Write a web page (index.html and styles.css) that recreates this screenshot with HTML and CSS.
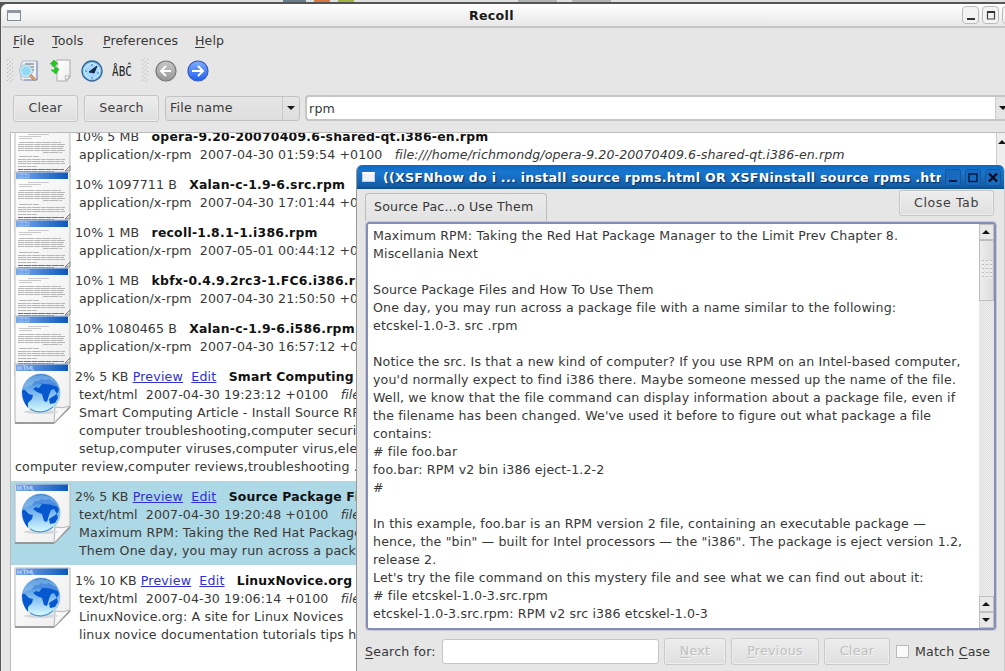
FILE: index.html
```html
<!DOCTYPE html>
<html lang="en">
<head>
<meta charset="utf-8">
<title>Recoll</title>
<link rel="stylesheet" href="styles.css">
</head>
<body>
<svg class="defs" width="0" height="0" aria-hidden="true">
  <defs>
    <linearGradient id="blueBar"><stop offset="0" stop-color="#78a9ed"/><stop offset=".3" stop-color="#5d91de"/><stop offset="1" stop-color="#0b57ba"/></linearGradient>
    <linearGradient id="paper" x1="0" y1="0" x2="1" y2="1"><stop offset="0" stop-color="#fff"/><stop offset="1" stop-color="#ededed"/></linearGradient>
    <linearGradient id="sky" x1="0" y1="0" x2="0" y2="1"><stop offset="0" stop-color="#2878d0"/><stop offset=".5" stop-color="#7dbaf0"/><stop offset="1" stop-color="#d8fbff"/></linearGradient>
    <linearGradient id="blueBtn" x1="0" y1="0" x2="0" y2="1"><stop offset="0" stop-color="#82adff"/><stop offset="1" stop-color="#1e5ef0"/></linearGradient>
    <linearGradient id="greyBtn" x1="0" y1="0" x2="0" y2="1"><stop offset="0" stop-color="#c8c8c8"/><stop offset="1" stop-color="#959595"/></linearGradient>
    <symbol id="sheet" viewBox="0 0 58 62">
      <path d="M1 1H56V44L40 60H1Z" fill="url(#paper)" stroke="#b5b5b5"/>
      <path d="M1 60H40L56 44" fill="none" stroke="#888" stroke-width="1.5"/>
      <path d="M40 60L41 44Q48 46 56 43Z" fill="#f8f8f8" stroke="#b5b5b5"/>
      <path d="M2 1.500H54V8H2Z" fill="url(#blueBar)"/>
    </symbol>
    <symbol id="doc" viewBox="0 0 58 62">
      <path d="M1 1H56V44L40 60H1Z" fill="url(#paper)" stroke="#bbb"/>
      <path d="M2 1.500H54V8H2Z" fill="url(#blueBar)"/>
      <path d="M4 3H15V7H4M8 3V7M12 3V7" fill="none" stroke="#a9c9f5" stroke-width=".8"/>
      <g fill="none" stroke="#a6a6a6" stroke-width=".8">
        <path d="M14 11.500H35M5 13.500H27M5 15.500H18" stroke="#bbb"/>
        <path d="M5 19.500H47M4 21.500H51M4 23.500H50M4 25.500H49M4 27.500H51M29 29.500H48" stroke-dasharray="6 .5 9 .8"/>
        <path d="M5 33.500H25M4 36.500H51M4 38.500H50M4 40.500H51M4 43.500H23" stroke-dasharray="8 .5 5 .7"/>
        <path d="M4 46.500H50M4 48.500H40" stroke="#555" stroke-dasharray="5 .5 8 .5"/>
      </g>
      <path d="M51 48L56 43V48Z" fill="#ddd" stroke="#666" stroke-width=".8"/>
    </symbol>
    <symbol id="web" viewBox="0 0 58 62">
      <use href="#sheet"/>
      <path d="M4 3V7M4 5H7M7 3V7M9 3H12M10.500 3V7M13 7V3L15 6L17 3V7M18 3V7H20" fill="none" stroke="#c8ddfa" stroke-width=".8"/>
      <ellipse cx="27" cy="49" rx="17" ry="2" fill="#d6d9dc"/>
      <circle cx="27" cy="30" r="19" fill="url(#sky)" stroke="#78acd5" stroke-width=".6"/>
      <path d="M8 28Q9 25 12 28L15 31L19 32L18 36L14 40L14 45Q8 38 8 28ZM18 22L21 18L25 18L26 16L31 17L35 16L42 20L45 27L43 31L40 26L37 27L35 32L33 39L30 38L28 31L23 29L19 26L22 24L25 25L28 21L23 21ZM35 36L38 34L43 31L44 35L41 40L36 41Z" fill="#0758cf"/>
      <path d="M10 25Q11 13 27 12Q41 13 44 24Q27 17 10 25Z" fill="#a7cef2" opacity=".45"/>
      <path d="M16 46Q27 53 39 44" stroke="#418bd0" fill="none"/>
    </symbol>
  </defs>
</svg>

<main class="desktop">
  <div class="backdrop"><i class="chip slate"></i><i class="chip orange"></i><i class="chip green"></i><i class="chip grey"></i><i class="chip grey"></i></div>
  <section class="main-window">
    <header class="titlebar">
      <i class="win-icon"></i>
      <h1>Recoll</h1>
      <div class="win-buttons">
        <b><svg width="17" height="18"><path d="M4 12H12" stroke="#333" stroke-width="2"/></svg></b>
        <b><svg width="17" height="18"><path d="M4.500 5H11.500V12H4.500Z" fill="none" stroke="#444" stroke-width="1.200"/><path d="M4 5H12" stroke="#333" stroke-width="2"/></svg></b>
        <b></b>
      </div>
    </header>
    <nav class="menu"><span class="m1"><u>F</u>ile</span><span class="m2"><u>T</u>ools</span><span class="m3"><u>P</u>references</span><span class="m4"><u>H</u>elp</span></nav>
    <div class="toolbar">
      <svg width="215" height="34" viewBox="0 0 215 34">
        <g stroke="#bbb" stroke-width="1"><path id="grip" d="M7 7l3-3M7 11l6-6M7 15l6-6M7 19l6-6M7 23l6-6M7 27l6-6M10 28l3-3" stroke-dasharray="2 1.500"/><use href="#grip" x="135"/></g>
        <path d="M23 7H37V26H21V10Z" fill="#edf0f7" stroke="#adb4c5"/><path d="M37 7V26H24" fill="none" stroke="#8090b5"/>
        <path d="M25 10H34M29 13H34M31 16H34" stroke="#666"/>
        <circle cx="26" cy="17" r="5.500" fill="#91d9f5" stroke="#cee8f3" stroke-width="2"/><circle cx="26" cy="17" r="6.500" fill="none" stroke="#78a8bd" stroke-width=".6"/>
        <path d="M30 21L35 26" stroke="#bd8050" stroke-width="3"/><path d="M30 21L35 26" stroke="#f2bf8c" stroke-width="1"/>
        <path d="M57 6H70V23L67 27H57Z" fill="url(#paper)" stroke="#aaa"/><path d="M66 26L70 22L65 22Z" fill="#fff" stroke="#999" stroke-width=".7"/>
        <path d="M50 10L54 6L58 10H56L55 13L59 15L56 20L51 16H54L55 13L52 12V10Z" fill="#1ecf18" stroke="#3cab42" stroke-width=".7"/>
        <circle cx="92" cy="17" r="10" fill="#8bc8fc" stroke="#326590" stroke-width="1.300"/><circle cx="92" cy="17" r="7.500" fill="#a4d6ff" stroke="#d9f0ff"/>
        <path d="M89 18L97 12L94 19Z" fill="#152b44" stroke="#152b44"/><path d="M85 17H87M92 10V12M92 23V25M97 19H99" stroke="#397cae"/>
        <circle cx="166" cy="17" r="10" fill="url(#greyBtn)" stroke="#777" stroke-width="1.200"/><path d="M171 17H161M166 12L161 17L166 22" fill="none" stroke="#fff" stroke-width="2"/>
        <circle cx="198" cy="17" r="10" fill="url(#blueBtn)" stroke="#385bbf" stroke-width="1.200"/><path d="M192 17H202M198 12L203 17L198 22" fill="none" stroke="#fff" stroke-width="2"/>
        <text x="112" y="22" class="spell" textLength="20" lengthAdjust="spacingAndGlyphs">ÅBĈ</text>
      </svg>
    </div>
    <div class="query">
      <button class="clear">Clear</button><button class="search">Search</button>
      <div class="combo"><span>File name</span><i><em class="down"></em></i></div>
      <div class="entry"><span>rpm</span><i><em class="down"></em></i></div>
    </div>
    <div class="results">
      <article class="rpm"><svg class="thumb"><use href="#doc"/></svg><div class="info"><p>10% 5 MB &nbsp; <b>opera-9.20-20070409.6-shared-qt.i386-en.rpm</b></p><p class="in">application/x-rpm &nbsp;2007-04-30 01:59:54 +0100 &nbsp; <cite>file:///home/richmondg/opera-9.20-20070409.6-shared-qt.i386-en.rpm</cite></p></div></article>
      <article class="rpm"><svg class="thumb"><use href="#doc"/></svg><div class="info"><p>10% 1097711 B &nbsp; <b>Xalan-c-1.9-6.src.rpm</b></p><p class="in">application/x-rpm &nbsp;2007-04-30 17:01:44 +0100</p></div></article>
      <article class="rpm"><svg class="thumb"><use href="#doc"/></svg><div class="info"><p>10% 1 MB &nbsp; <b>recoll-1.8.1-1.i386.rpm</b></p><p class="in">application/x-rpm &nbsp;2007-05-01 00:44:12 +0100</p></div></article>
      <article class="rpm"><svg class="thumb"><use href="#doc"/></svg><div class="info"><p>10% 1 MB &nbsp; <b>kbfx-0.4.9.2rc3-1.FC6.i386.rpm</b></p><p class="in">application/x-rpm &nbsp;2007-04-30 21:50:50 +0100</p></div></article>
      <article class="rpm"><svg class="thumb"><use href="#doc"/></svg><div class="info"><p>10% 1080465 B &nbsp; <b>Xalan-c-1.9-6.i586.rpm</b></p><p class="in">application/x-rpm &nbsp;2007-04-30 16:57:12 +0100</p></div></article>
      <article><svg class="thumb"><use href="#web"/></svg><div class="info"><p>2% 5 KB <a>Preview</a>&nbsp; <a>Edit</a> &nbsp; <b>Smart Computing</b></p><p class="in">text/html &nbsp;2007-04-30 19:23:12 +0100 &nbsp; <cite>file</cite></p><p class="in wide">Smart Computing Article - Install Source RPMs</p><p class="in wide">computer troubleshooting,computer security</p><p class="in wide">setup,computer viruses,computer virus,elec</p><p class="out wide">computer review,computer reviews,troubleshooting ...</p></div></article>
      <article class="selected"><svg class="thumb"><use href="#web"/></svg><div class="info"><p>2% 5 KB <a>Preview</a>&nbsp; <a>Edit</a> &nbsp; <b>Source Package Files</b></p><p class="in">text/html &nbsp;2007-04-30 19:20:48 +0100 &nbsp; <cite>file</cite></p><p class="in wide">Maximum RPM: Taking the Red Hat Package</p><p class="in wide">Them One day, you may run across a package</p></div></article>
      <article><svg class="thumb"><use href="#web"/></svg><div class="info"><p>1% 10 KB <a>Preview</a>&nbsp; <a>Edit</a> &nbsp; <b>LinuxNovice.org</b></p><p class="in">text/html &nbsp;2007-04-30 19:06:14 +0100 &nbsp; <cite>file</cite></p><p class="in wide">LinuxNovice.org: A site for Linux Novices</p><p class="in wide">linux novice documentation tutorials tips h</p></div></article>
      <div class="list-scroll"><em class="up"></em></div>
    </div>
  </section>

  <section class="preview">
    <header class="preview-title">
      <i class="mini"></i><h2>((XSFNhow do i ... install source rpms.html OR XSFNinstall source rpms .html</h2>
      <div class="preview-buttons">
        <b><svg width="16" height="17"><path d="M4 12H12" stroke="#061c44" stroke-width="2"/></svg></b>
        <b><svg width="16" height="17"><path d="M4 5H12V12.500H4Z" fill="none" stroke="#061c44" stroke-width="1.500"/></svg></b>
        <b><svg width="16" height="17"><path d="M4 4.500L12 12.500M12 4.500L4 12.500" stroke="#030b1c" stroke-width="2.200"/></svg></b>
      </div>
    </header>
    <div class="tabs"><div class="tab">Source Pac...o Use Them</div><button class="close">Close Tab</button></div>
    <div class="reader">
      <div class="text"><p>Maximum RPM: Taking the Red Hat Package Manager to the Limit Prev Chapter 8.</p><p>Miscellania Next</p><p></p><p>Source Package Files and How To Use Them</p><p>One day, you may run across a package file with a name similar to the following:</p><p>etcskel-1.0-3. src .rpm</p><p></p><p>Notice the src. Is that a new kind of computer? If you use RPM on an Intel-based computer,</p><p>you'd normally expect to find i386 there. Maybe someone messed up the name of the file.</p><p>Well, we know that the file command can display information about a package file, even if</p><p>the filename has been changed. We've used it before to figure out what package a file</p><p>contains:</p><p># file foo.bar</p><p>foo.bar: RPM v2 bin i386 eject-1.2-2</p><p>#</p><p></p><p>In this example, foo.bar is an RPM version 2 file, containing an executable package —</p><p>hence, the "bin" — built for Intel processors — the "i386". The package is eject version 1.2,</p><p>release 2.</p><p>Let's try the file command on this mystery file and see what we can find out about it:</p><p># file etcskel-1.0-3.src.rpm</p><p>etcskel-1.0-3.src.rpm: RPM v2 src i386 etcskel-1.0-3</p></div>
      <div class="scrollbar"><i class="step"><em class="up"></em></i><i class="handle"><em class="dots"></em></i><i class="groove"></i><i class="step"><em class="up"></em></i><i class="step"><em class="down"></em></i></div>
    </div>
    <footer><label><u>S</u>earch for:</label><div class="find"></div><button class="next" disabled><u>N</u>ext</button><button class="prev" disabled><u>P</u>revious</button><button class="clr" disabled>Clear</button><i class="check"></i><span class="case">Match <u>C</u>ase</span></footer>
  </section>
</main>
</body>
</html>
```
FILE: styles.css
```css
* { box-sizing: border-box; }
body { margin: 0; font: 12.6px/18px "DejaVu Sans", sans-serif; color: #383838; }
h1, h2, p { margin: 0; }
button { font: inherit; color: #404040; padding: 0 0 2px; background: linear-gradient(#ededed, #dfdfdf); border: 1.5px solid #c5c5c5; border-radius: 3px; box-shadow: inset 0 0 0 1px #eee; }
.defs { position: absolute; }
u { text-underline-offset: 2px; }
.desktop { position: relative; width: 1005px; height: 671px; overflow: hidden; background: #555; }
.backdrop { height: 2px; background: #dde2e1; display: flex; padding-left: 283px; }
.chip { height: 2px; width: 23px; margin-right: 8px; background: #66808f; }
.orange { background: #d9793d; width: 16px; }
.green { background: #9eb542; width: 16px; margin-right: 164px; }
.grey { background: #b0b5b4; width: 39px; margin-right: 15px; }

.main-window { height: 667px; margin: 2px 0 0 1px; background: #e6e6e6; border-left: 1px solid #eee; border-radius: 6px 0 0 0; overflow: hidden; display: flex; flex-direction: column; }
.titlebar { height: 24px; flex: none; display: flex; align-items: center; background: linear-gradient(#fff, #e8e8e8); border-bottom: 2px solid #c6c6c6; }
.win-icon { width: 14px; height: 11px; margin-left: 5px; background: #f5f5f5; border: 1.5px solid #858b93; border-top: 3px solid #9097a0; }
.titlebar h1 { font-size: 12.6px; line-height: 22px; margin-left: 448px; padding-top: 2px; color: #191919; width: 60px; letter-spacing: .3px; }
.win-buttons { display: flex; gap: 3px; margin-left: auto; margin-right: -14px; }
.win-buttons b { width: 17px; height: 18px; background: #f3f3f3; border: 1px solid #bbb; border-radius: 4px; overflow: hidden; }
.win-buttons svg { display: block; }
.menu { display: flex; padding: 4px 0 0 11px; height: 27px; flex: none; letter-spacing: .1px; }
.m1 { width: 39px; } .m2 { width: 51px; } .m3 { width: 92px; }
.toolbar { height: 39px; flex: none; }
.toolbar svg { display: block; margin: -1px 0 0 -2px; }
.spell { font: 14px "DejaVu Sans Mono", monospace; fill: #222; }
.query { display: flex; padding-left: 11px; height: 38px; flex: none; align-items: flex-start; letter-spacing: .2px; }
.query button { height: 27px; margin-top: 1px; letter-spacing: .2px; }
.clear { width: 65px; } .search { width: 75px; margin-left: 6px; }
.combo { width: 135px; height: 25px; margin: 2px 0 0 6px; border: 1.5px solid #c3c3c3; border-radius: 3px; display: flex; background: linear-gradient(#e6e6e6, #dedede); line-height: 22px; padding-left: 4px; }
.combo i { margin-left: auto; width: 17px; border-left: 1px solid #c8c8c8; }
.entry { flex: 1; margin-left: 5px; margin-top: 1px; height: 26px; background: #fff; border: 2px solid #c6c6c6; border-right: 0; border-radius: 4px 0 0 4px; display: flex; line-height: 23px; padding-left: 2px; }
.entry i { width: 10px; margin-left: auto; background: #e5e5e5; border-left: 1px solid #ccc; overflow: hidden; }
em { display: block; width: 0; height: 0; }
.down { border-left: 4px solid transparent; border-right: 4px solid transparent; border-top: 4px solid #151515; margin: 9px auto 0; }
.up { border-left: 4px solid transparent; border-right: 4px solid transparent; border-bottom: 4px solid #151515; }
.entry .down { margin-left: 3px; }

.results { flex: 1; margin-left: 8px; border-left: 1px solid #bbb; border-top: 1px solid #bbb; background: #fff; position: relative; overflow: hidden; letter-spacing: .09px; }
.results article:first-child { margin-top: -12px; }
.results article { padding: 7px 0 5px 3px; display: flex; }
.thumb { width: 58px; height: 62px; margin: -5px 0 -60px 0; flex: none; }
.info { padding-left: 3px; white-space: nowrap; }
.info p { height: 18px; }
.info .in { padding-left: 4px; }
.info .out { margin-left: -60px; }
.wide { letter-spacing: .17px; }
.info b { color: #111; font-size: 12.4px; letter-spacing: .16px; }
.rpm .info b { letter-spacing: .25px; }
.info a { color: #3030d0; text-decoration: underline; letter-spacing: .2px; }
.selected { background: #add8e6; }
.list-scroll { position: absolute; right: 0; top: 0; bottom: 0; width: 9px; background: #eee; border-left: 1px solid #ccc; }
.list-scroll .up { margin: 7px 0 0 1px; }

.preview { position: absolute; left: 356px; top: 165px; width: 649px; height: 510px; background: #e6e6e6; border-left: 1.5px solid #999; border-right: 1px solid #ccc; border-radius: 6px 6px 0 0; overflow: hidden; display: flex; flex-direction: column; }
.preview-title { height: 24px; flex: none; background: linear-gradient(#0d69c1, #1976cf 30%, #155fa8 85%, #0c4c8c); display: flex; align-items: center; padding-left: 6px; margin-left: -1px; }
.mini { width: 13px; height: 10px; flex: none; background: #eef3fa; border: 1px solid #c4cbd6; border-top: 2px solid #fff; }
.preview-title h2 { font-size: 12.6px; line-height: 24px; padding-top: 1px; color: #fff; text-shadow: 1px 1px 1px #092e60; width: 558px; flex: none; margin-left: 8px; overflow: hidden; white-space: nowrap; letter-spacing: .27px; }
.preview-buttons { display: flex; gap: 4px; margin-left: 4px; }
.preview-buttons b { width: 16px; height: 17px; border: 1px solid #1a5696; border-radius: 3px; background: #176abe; }
.preview-buttons svg { display: block; margin: -1px; }
.tabs { height: 32px; flex: none; display: flex; padding-left: 8px; }
.tab { margin-top: 4px; width: 182px; height: 28px; padding: 4px 0 0 8px; border: 1.5px solid #bdbdbd; border-bottom: 0; border-radius: 4px 4px 0 0; background: linear-gradient(#eaeaea, #e3e3e3); letter-spacing: .15px; white-space: nowrap; }
.close { width: 95px; height: 26px; margin: 1px 0 0 352px; letter-spacing: .6px; padding: 0; }
.reader { height: 408px; margin: 1px 8px 0 9px; flex: none; border: 2px solid #858db9; outline: 1px solid #c8c8d2; border-radius: 3px; background: #fff; display: flex; }
.text { flex: 1; min-width: 0; padding: 3px 0 0 5px; white-space: nowrap; letter-spacing: .145px; }
.text p { height: 18px; }
.scrollbar { width: 15px; flex: none; display: flex; flex-direction: column; background: #e8e8e8; }
.step { height: 16px; border: 1px solid #c0c0c0; background: #e8e8e8; }
.step .up, .step .down { margin: 5px auto 0 2px; }
.handle { height: 61px; border: 1px solid #bdbdbd; background: linear-gradient(90deg, #ededed, #ddd); }
.dots { width: 10px; height: 19px; margin: 19px auto 0; background: repeating-linear-gradient(90deg, transparent 0 2px, #e6e6e6 2px 4px), repeating-linear-gradient(#bbb 0 1px, #eee 1px 4px); }
.groove { flex: 1; background: repeating-conic-gradient(#eee 0 25%, #e0e0e0 0 50%) 0 0 / 2px 2px; }
footer { height: 43px; display: flex; align-items: center; padding-left: 8px; }
footer label { width: 77px; flex: none; letter-spacing: .2px; }
.find { width: 217px; height: 25px; border: 1.5px solid #c5c5c5; border-radius: 3px; background: #fff; }
footer button { height: 27px; flex: none; letter-spacing: .3px; }
footer button:disabled { color: #c0c0c0; text-shadow: 1px 1px 0 #f5f5f5; border-color: #cacaca; }
.next { width: 62px; margin-left: 5px; } .prev { width: 88px; margin-left: 5px; } .clr { width: 66px; margin-left: 5px; }
.check { width: 13px; height: 13px; flex: none; margin-left: 6px; background: #fafafa; border: 1px solid #bbb; }
.case { margin-left: 6px; white-space: nowrap; letter-spacing: .2px; }
```
